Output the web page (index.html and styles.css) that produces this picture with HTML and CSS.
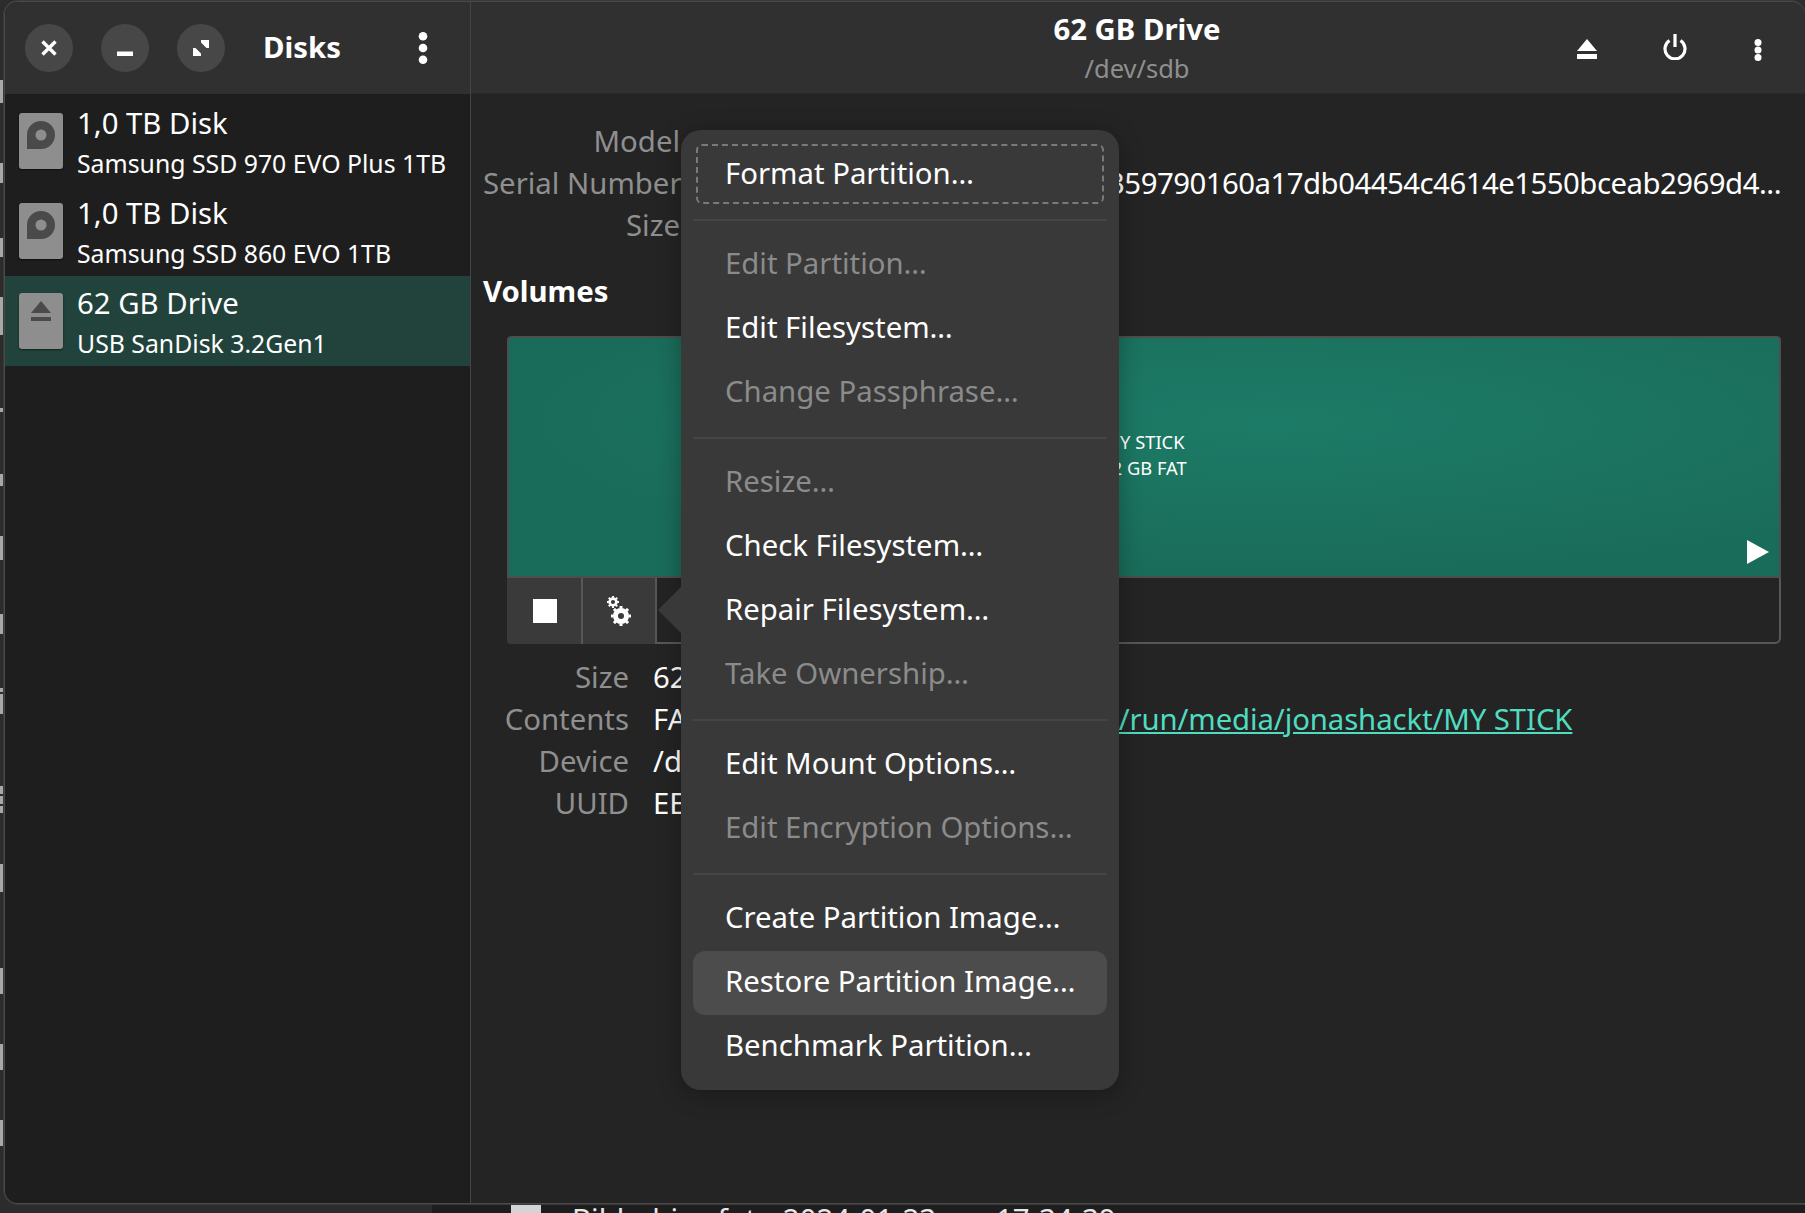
FILE: index.html
```html
<!DOCTYPE html>
<html lang="en">
<head>
    <meta charset="UTF-8">
    <title>Disks</title>
    <link rel="stylesheet" href="styles.css">
</head>
<body>
    <div class="backdrop-strip">
        <div class="backdrop-thumb"></div>
        <span class="backdrop-text">Bildschirmfoto 2024-01-23 &nbsp;...&nbsp; 17-34-39</span>
    </div>
    <div class="edge-marks">
        <i class="m1"></i><i class="m2"></i><i class="m3"></i><i class="m4"></i><i class="m5"></i><i class="m6"></i><i class="m7"></i><i class="m8"></i><i class="m9"></i><i class="m10"></i><i class="m11"></i><i class="m12"></i><i class="m13"></i><i class="m14"></i><i class="m15"></i><i class="m16"></i><i class="m17"></i>
    </div>

    <div class="window">
        <aside class="sidebar">
            <header class="sidebar-head">
                <button class="round-btn">
                    <svg width="16" height="16" viewBox="0 0 16 16"><path d="M1.500 1.500l13 13M14.500 1.500l-13 13" stroke="#fff" stroke-width="3.400" fill="none"/></svg>
                </button>
                <button class="round-btn">
                    <svg width="16" height="16" viewBox="0 0 16 16"><rect x="0" y="11.500" width="16" height="5" fill="#fff"/></svg>
                </button>
                <button class="round-btn">
                    <svg width="16" height="16" viewBox="0 0 16 16"><path d="M8 0h8v8h-2.500L8 2.500zM0 8h2.500L8 13.500V16H0z" fill="#fff"/></svg>
                </button>
                <h1 class="app-title">Disks</h1>
                <button class="menu-btn">
                    <svg width="10" height="32" viewBox="0 0 10 32"><circle cx="5" cy="4.300" r="4.300" fill="#fff"/><circle cx="5" cy="16" r="4.300" fill="#fff"/><circle cx="5" cy="27.700" r="4.300" fill="#fff"/></svg>
                </button>
            </header>
            <ul class="disk-list">
                <li class="disk">
                    <div class="disk-icon">
                        <svg width="28" height="28" viewBox="0 0 28 28"><path fill-rule="evenodd" d="M14 0a14 14 0 0 1 0 28H0V14A14 14 0 0 1 14 0zm0 8.500a5.500 5.500 0 1 0 0 11 5.500 5.500 0 0 0 0-11z" fill="#4a4a4a"/></svg>
                    </div>
                    <div class="disk-text">
                        <div class="disk-name">1,0 TB Disk</div>
                        <div class="disk-sub">Samsung SSD 970 EVO Plus 1TB</div>
                    </div>
                </li>
                <li class="disk">
                    <div class="disk-icon">
                        <svg width="28" height="28" viewBox="0 0 28 28"><path fill-rule="evenodd" d="M14 0a14 14 0 0 1 0 28H0V14A14 14 0 0 1 14 0zm0 8.500a5.500 5.500 0 1 0 0 11 5.500 5.500 0 0 0 0-11z" fill="#4a4a4a"/></svg>
                    </div>
                    <div class="disk-text">
                        <div class="disk-name">1,0 TB Disk</div>
                        <div class="disk-sub">Samsung SSD 860 EVO 1TB</div>
                    </div>
                </li>
                <li class="disk selected">
                    <div class="disk-icon">
                        <svg width="20" height="20" viewBox="0 0 20 20"><path d="M10 0l10 12H0z" fill="#4a4a4a"/><rect y="16" width="20" height="4" fill="#4a4a4a"/></svg>
                    </div>
                    <div class="disk-text">
                        <div class="disk-name">62 GB Drive</div>
                        <div class="disk-sub">USB SanDisk 3.2Gen1</div>
                    </div>
                </li>
            </ul>
        </aside>

        <main class="main">
            <header class="main-head">
                <div class="head-title">
                    <div class="drive-title">62 GB Drive</div>
                    <div class="drive-path">/dev/sdb</div>
                </div>
                <div class="head-actions">
                    <svg class="act-eject" width="20" height="20" viewBox="0 0 20 20"><path d="M10 0l10 12H0z" fill="#fff"/><rect y="15" width="20" height="5" fill="#fff"/></svg>
                    <svg class="act-power" width="24" height="26" viewBox="0 0 24 26"><path d="M6.500 6.500a10 10 0 1 0 11 0" stroke="#fff" stroke-width="3.200" fill="none"/><rect x="10.400" y="0" width="3.200" height="13" fill="#fff"/></svg>
                    <svg class="act-menu" width="8" height="22" viewBox="0 0 8 22"><circle cx="4" cy="3.500" r="3.500" fill="#fff"/><circle cx="4" cy="11" r="3.500" fill="#fff"/><circle cx="4" cy="18.500" r="3.500" fill="#fff"/></svg>
                </div>
            </header>

            <section class="content">
                <div class="info-grid drive-info">
                    <span class="info-label">Model</span><span class="info-value"></span>
                    <span class="info-label">Serial Number</span><span class="info-value serial">USB SanDisk 3.2Gen1 0401359790160a17db04454c4614e1550bceab2969d4...</span>
                    <span class="info-label">Size</span><span class="info-value"></span>
                </div>

                <h2 class="volumes-title">Volumes</h2>

                <div class="volume-box">
                    <div class="volume-graph">
                        <div class="volume-label">MY STICK<br>62 GB FAT</div>
                        <svg class="play-mark" width="22" height="24" viewBox="0 0 22 24"><path d="M0 0l22 12L0 24z" fill="#fff"/></svg>
                    </div>
                    <div class="volume-tools">
                        <div class="tool tool-stop">
                            <div class="stop-square"></div>
                        </div>
                        <div class="tool tool-gears">
                            <svg width="24" height="30" viewBox="0 0 24 30">
                                <circle cx="6" cy="6" r="3.400" fill="none" stroke="#fff" stroke-width="2.600"/>
                                <path d="M6 0v12M0 6h12M1.760 1.760l8.480 8.480M10.240 1.760l-8.480 8.480" stroke="#fff" stroke-width="2" stroke-dasharray="1.800 8.400"/>
                                <circle cx="14" cy="20" r="5.500" fill="none" stroke="#fff" stroke-width="5"/>
                                <path d="M14 10v20M4 20h20M6.930 12.930l14.140 14.140M21.070 12.930L6.930 27.070" stroke="#fff" stroke-width="3" stroke-dasharray="2.500 15"/>
                            </svg>
                        </div>
                        <div class="tool-rest"></div>
                    </div>
                </div>

                <div class="info-grid volume-info">
                    <span class="info-label">Size</span><span class="info-value">62 GB</span>
                    <span class="info-label">Contents</span><span class="info-value">FAT (32-bit version) – Mounted at <a class="mount-link" href="#">/run/media/jonashackt/MY STICK</a></span>
                    <span class="info-label">Device</span><span class="info-value">/dev/sdb1</span>
                    <span class="info-label">UUID</span><span class="info-value">EEE4-8AFC</span>
                </div>
            </section>
        </main>

        <nav class="popover">
            <div class="pop-item focused">Format Partition…</div>
            <div class="pop-sep"></div>
            <div class="pop-item off">Edit Partition…</div>
            <div class="pop-item">Edit Filesystem…</div>
            <div class="pop-item off">Change Passphrase…</div>
            <div class="pop-sep"></div>
            <div class="pop-item off">Resize…</div>
            <div class="pop-item">Check Filesystem…</div>
            <div class="pop-item">Repair Filesystem…</div>
            <div class="pop-item off">Take Ownership…</div>
            <div class="pop-sep"></div>
            <div class="pop-item">Edit Mount Options…</div>
            <div class="pop-item off">Edit Encryption Options…</div>
            <div class="pop-sep"></div>
            <div class="pop-item">Create Partition Image…</div>
            <div class="pop-item hover">Restore Partition Image…</div>
            <div class="pop-item">Benchmark Partition…</div>
        </nav>
    </div>
</body>
</html>
```

FILE: styles.css
```css
* {
    box-sizing: border-box;
}
html, body {
    margin: 0;
    height: 100%;
    overflow: hidden;
}
body {
    position: relative;
    background-color: #2c2c2c;
    font-family: "Noto Sans", sans-serif;
    color: #fff;
}

/* bits of the window behind */
.backdrop-strip {
    position: absolute;
    left: 432px;
    right: 0;
    bottom: 0;
    height: 10px;
    background-color: #1e1e1e;
    overflow: hidden;
}
.backdrop-thumb {
    position: absolute;
    left: 79px;
    top: 0;
    width: 30px;
    height: 10px;
    background-color: #d4d4d4;
}
.backdrop-text {
    position: absolute;
    left: 140px;
    top: 0;
    font-size: 29.33px;
    line-height: 32px;
    word-spacing: 1.5px;
    color: #e8e8e8;
    white-space: nowrap;
}
.edge-marks i {
    position: absolute;
    left: 0;
    width: 3px;
    background-color: #a8a8a8;
}
.m1 { top: 80px; height: 23px; }
.m2 { top: 163px; height: 20px; }
.m3 { top: 238px; height: 19px; }
.m4 { top: 297px; height: 38px; }
.m5 { top: 408px; height: 4px; }
.m6 { top: 474px; height: 12px; }
.m7 { top: 536px; height: 24px; }
.m8 { top: 614px; height: 20px; }
.m9 { top: 688px; height: 4px; }
.m10 { top: 694px; height: 20px; }
.m11 { top: 786px; height: 8px; }
.m12 { top: 796px; height: 8px; }
.m13 { top: 806px; height: 7px; }
.m14 { top: 864px; height: 28px; }
.m15 { top: 968px; height: 26px; }
.m16 { top: 1044px; height: 26px; }
.m17 { top: 1120px; height: 26px; }

/* main window */
.window {
    position: absolute;
    left: 4px;
    top: 1px;
    right: 0;
    bottom: 9px;
    display: flex;
    background-color: #242424;
    border: 1px solid #4a4a4a;
    border-right: 0;
    border-radius: 14px 14px 0 14px;
    box-shadow: 0 0 0 1px #3a3a3a;
    overflow: hidden;
}

.sidebar {
    width: 466px;
    flex-shrink: 0;
    background-color: #1e1e1e;
    border-right: 1px solid #444;
}
.sidebar-head {
    height: 92px;
    display: flex;
    align-items: center;
    padding-left: 20px;
    gap: 28px;
    background-color: #303030;
}
.round-btn {
    width: 48px;
    height: 48px;
    padding: 0;
    border: 0;
    border-radius: 50%;
    background-color: #474747;
    display: flex;
    align-items: center;
    justify-content: center;
}
.app-title {
    margin: 0 0 0 10px;
    font-size: 29.33px;
    font-weight: 700;
    line-height: 1;
}
.menu-btn {
    margin-left: 49px;
    padding: 0;
    border: 0;
    background: none;
    display: flex;
}
.disk-list {
    list-style: none;
    margin: 0;
    padding: 2px 0 0;
}
.disk {
    height: 90px;
    display: flex;
    align-items: center;
    gap: 14px;
    padding-left: 14px;
}
.disk.selected {
    background-color: #21433c;
}
.disk-icon {
    width: 44px;
    height: 56px;
    border-radius: 3px;
    background-color: #8e8e8e;
    box-shadow: 0 1px 2px rgba(0, 0, 0, 0.5);
    display: flex;
    justify-content: center;
    padding-top: 8px;
}
.disk-text {
    padding-top: 4px;
}
.disk-name {
    font-size: 29.33px;
    line-height: 40px;
}
.disk-sub {
    font-size: 24.8px;
    line-height: 40px;
}

.main {
    flex: 1;
    min-width: 0;
}
.main-head {
    height: 92px;
    position: relative;
    background-color: #303030;
    border-bottom: 1px solid #2a2a2a;
}
.head-title {
    text-align: center;
    padding-top: 6px;
    margin-right: 2px;
}
.drive-title {
    font-size: 29.33px;
    font-weight: 700;
    line-height: 42px;
}
.drive-path {
    font-size: 25.5px;
    line-height: 37px;
    color: #8f8f8f;
}
.head-actions {
    position: absolute;
    top: 0;
    right: 0;
    bottom: 0;
    display: flex;
    align-items: center;
}
.act-eject {
    margin: 2px 66px 0 0;
}
.act-power {
    margin: 0 67px 2px 0;
}
.act-menu {
    margin: 4px 43px 0 0;
}

.content {
    padding: 0 24px 0 12px;
}
.info-grid {
    display: grid;
    grid-template-columns: auto 1fr;
    column-gap: 24px;
    font-size: 29.33px;
    line-height: 42px;
}
.info-label {
    text-align: right;
    color: #8f8f8f;
    white-space: nowrap;
}
.info-value {
    white-space: nowrap;
    min-width: 0;
}
.drive-info {
    padding-top: 26px;
    grid-template-columns: 197px 1fr;
}
.serial {
    overflow: hidden;
    text-align: right;
    letter-spacing: -0.5px;
}
.volumes-title {
    margin: 24px 0 0;
    font-size: 29.33px;
    font-weight: 700;
    line-height: 42px;
}
.volume-box {
    margin: 24px 0 0 24px;
    border-radius: 4px;
    overflow: hidden;
}
.volume-graph {
    position: relative;
    height: 242px;
    border: 2px solid #4e4e4e;
    border-radius: 4px 4px 0 0;
    background: radial-gradient(ellipse at 60% 35%, #1c7b66 0%, #1a6c5a 70%);
    display: flex;
    align-items: center;
    justify-content: center;
}
.volume-label {
    font-size: 18.3px;
    line-height: 26px;
    text-align: center;
    transform: translateY(-2px);
}
.play-mark {
    position: absolute;
    right: 10px;
    bottom: 12px;
}
.volume-tools {
    height: 66px;
    display: flex;
}
.tool {
    background-color: #3a3a3a;
    border-right: 2px solid #575757;
    display: flex;
    align-items: center;
    justify-content: center;
}
.tool-stop {
    width: 76px;
    padding-left: 2px;
}
.tool-gears {
    width: 74px;
}
.stop-square {
    width: 24px;
    height: 24px;
    background-color: #fff;
}
.tool-rest {
    flex: 1;
    border: 2px solid #575757;
    border-top: 0;
    border-left: 0;
    border-radius: 0 0 6px 0;
}
.volume-info {
    margin: 12px 0 0 12px;
    grid-template-columns: 134px 1fr;
}
.mount-link {
    margin-left: 7px;
    letter-spacing: -0.1px;
    color: #4fdcc0;
}

/* context menu */
.popover {
    position: absolute;
    left: 676px;
    top: 128px;
    width: 438px;
    padding: 14px 12px 11px;
    background-color: #393939;
    border-radius: 20px;
    box-shadow: 0 4px 24px rgba(0, 0, 0, 0.3);
    font-size: 29.33px;
}
.popover::before {
    content: "";
    position: absolute;
    left: -23px;
    top: 457px;
    border-top: 23px solid transparent;
    border-bottom: 23px solid transparent;
    border-right: 23px solid #393939;
}
.pop-item {
    height: 64px;
    line-height: 60px;
    padding-left: 32px;
    border-radius: 12px;
    white-space: nowrap;
}
.pop-item.off {
    color: #8b8b8b;
}
.pop-item.focused {
    height: 60px;
    margin: 0 3px 15px;
    border: 2px dashed #7a7a7a;
    line-height: 54px;
    padding-left: 27px;
    border-radius: 6px;
}
.pop-item.hover {
    background-color: #4c4c4c;
}
.pop-sep {
    height: 2px;
    margin: 12px 0;
    background-color: #454545;
}
```
